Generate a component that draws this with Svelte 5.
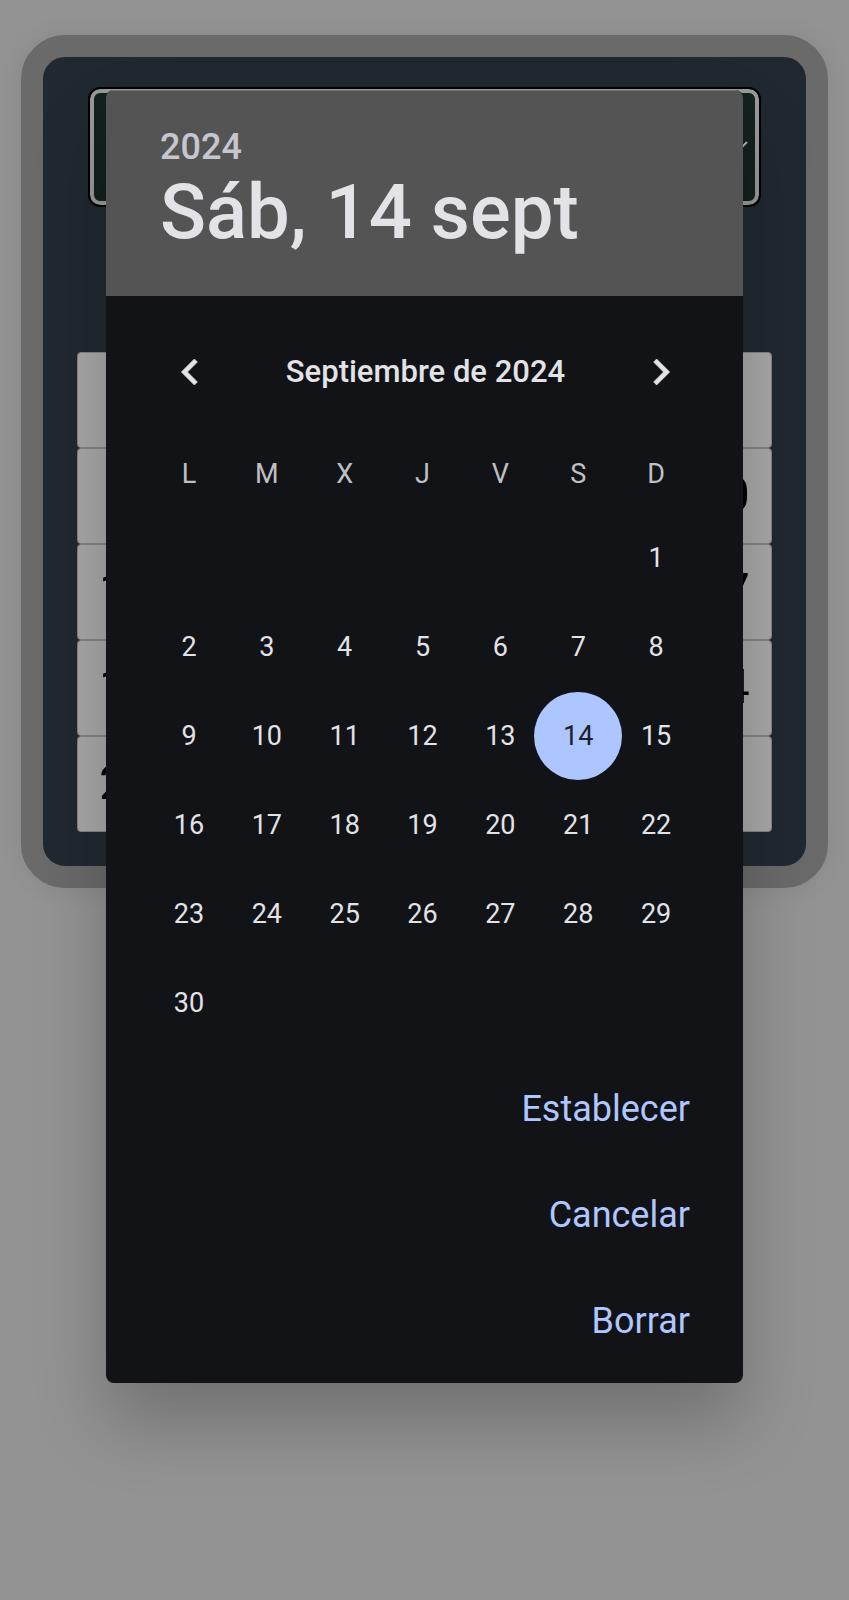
<script>
  const weekdays = ['L', 'M', 'X', 'J', 'V', 'S', 'D'];
  const leading = Array(6).fill(null);
  const days = [...leading, ...Array.from({ length: 30 }, (_, i) => i + 1)];
  const weeks = [];
  for (let i = 0; i < 42; i += 7) {
    weeks.push(Array.from({ length: 7 }, (_, d) => days[i + d] ?? null));
  }
  const actions = ['Establecer', 'Cancelar', 'Borrar'];
  const backRows = [
    ['', ''],
    ['', '10'],
    ['11', '17'],
    ['18', '24'],
    ['25', '']
  ];
  let selected = $state(14);
</script>

<div class="page">
  <main class="card">
    <div class="field">
      <select aria-label="Mes"></select>
      <svg class="caret" viewBox="0 0 24 14" aria-hidden="true"><path d="M2 2l10 10L22 2" /></svg>
    </div>
    <table class="back">
      <tbody>
        {#each backRows as [first, last]}
          <tr>
            <td>{first}</td><td></td><td></td><td></td><td></td><td></td><td>{last}</td>
          </tr>
        {/each}
      </tbody>
    </table>
  </main>

  <div class="overlay">
    <div class="dialog" role="dialog" aria-labelledby="date">
      <header>
        <div class="year">2024</div>
        <h1 id="date">Sáb, 14 sept</h1>
      </header>
      <div class="body">
        <div class="month">
          <button class="arrow" aria-label="Anterior">
            <svg viewBox="0 0 24 24"><path d="M15.41 7.41L14 6l-6 6 6 6 1.41-1.41L10.83 12z" /></svg>
          </button>
          <h2>Septiembre de 2024</h2>
          <button class="arrow" aria-label="Siguiente">
            <svg viewBox="0 0 24 24"><path d="M10 6L8.59 7.41 13.17 12l-4.58 4.59L10 18l6-6z" /></svg>
          </button>
        </div>
        <table class="days">
          <thead>
            <tr>{#each weekdays as d}<th scope="col">{d}</th>{/each}</tr>
          </thead>
          <tbody>
            {#each weeks as week}
              <tr>
                {#each week as day}
                  <td>
                    {#if day}
                      <button class:selected={day === selected} onclick={() => (selected = day)}>{day}</button>
                    {/if}
                  </td>
                {/each}
              </tr>
            {/each}
          </tbody>
        </table>
        <div class="actions">
          {#each actions as a}<button>{a}</button>{/each}
        </div>
      </div>
    </div>
  </div>
</div>

<style>
  :global(body) {
    margin: 0;
    background: #939393;
  }
  .page {
    position: relative;
    box-sizing: border-box;
    min-height: 100vh;
    padding: 35px 21px;
    font-family: Roboto, "Liberation Sans", sans-serif;
  }
  button {
    border: 0;
    padding: 0;
    background: none;
    font: inherit;
    color: inherit;
    cursor: pointer;
  }
  .card {
    border: 22px solid #6a6a6a;
    border-radius: 44px;
    background: #212930;
    padding: 32px 34px 34px;
    box-shadow: 0 0 24px rgba(0, 0, 0, 0.08);
  }
  .field {
    position: relative;
    margin: 0 13px 147px;
  }
  select {
    display: block;
    box-sizing: border-box;
    width: 100%;
    height: 116px;
    appearance: none;
    border: 4px solid #9a9a9a;
    border-radius: 10px;
    outline: 2px solid #000;
    background: #12221f;
  }
  .caret {
    position: absolute;
    right: 10px;
    top: 51px;
    width: 24px;
    fill: none;
    stroke: #b0b0b0;
    stroke-width: 2;
  }
  .back {
    width: 100%;
    table-layout: fixed;
    border-collapse: separate;
    border-spacing: 0;
  }
  .back td {
    box-sizing: border-box;
    height: 96px;
    padding: 0 0 4px;
    border: 1px solid #848484;
    border-radius: 4px;
    background: #a8a8a8;
    color: #000;
    text-align: center;
    font-size: 49px;
    font-weight: 400;
  }
  .overlay {
    position: absolute;
    inset: 0;
    padding: 90px 106px;
  }
  .dialog {
    border-radius: 8px;
    overflow: hidden;
    background: #111316;
    color: #e3e2e6;
    box-shadow: 0 40px 72px rgba(0, 0, 0, 0.23);
  }
  header {
    padding: 36px 54px 42px;
    background: #545454;
    border-top: 1px solid #707070;
  }
  .year {
    font-size: 36px;
    line-height: 40px;
    font-weight: 500;
    color: #c5c6d0;
  }
  h1 {
    margin: 0;
    font-size: 76px;
    line-height: 84px;
    padding-top: 3px;
    font-weight: 500;
  }
  .body {
    padding: 48px 48px 14px 44px;
  }
  .month {
    display: flex;
    align-items: center;
    justify-content: space-between;
    padding: 0 8px 0 14px;
  }
  .arrow {
    width: 52px;
    height: 56px;
  }
  .arrow svg {
    display: block;
    width: 52px;
    margin: auto;
    fill: #e3e2e6;
    stroke: #e3e2e6;
    stroke-width: 0.3;
  }
  h2 {
    margin: 0;
    font-size: 31px;
    line-height: 40px;
    font-weight: 500;
  }
  .days {
    width: 100%;
    margin-top: 35px;
    table-layout: fixed;
    border-spacing: 0;
    font-size: 27px;
  }
  th {
    height: 78px;
    padding: 0;
    font-weight: 400;
    color: #c0c0c4;
  }
  .days td {
    height: 89px;
    padding: 0;
  }
  .days button {
    display: block;
    width: 88px;
    height: 88px;
    margin: 0 -5px;
    border-radius: 50%;
  }
  .days .selected {
    background: #adc6ff;
    color: #1a1f2e;
  }
  .actions {
    display: flex;
    flex-direction: column;
    align-items: flex-end;
    gap: 10px;
    padding: 14px 5px 0 0;
  }
  .actions button {
    height: 96px;
    font-size: 36px;
    color: #b0c6ff;
  }
</style>
